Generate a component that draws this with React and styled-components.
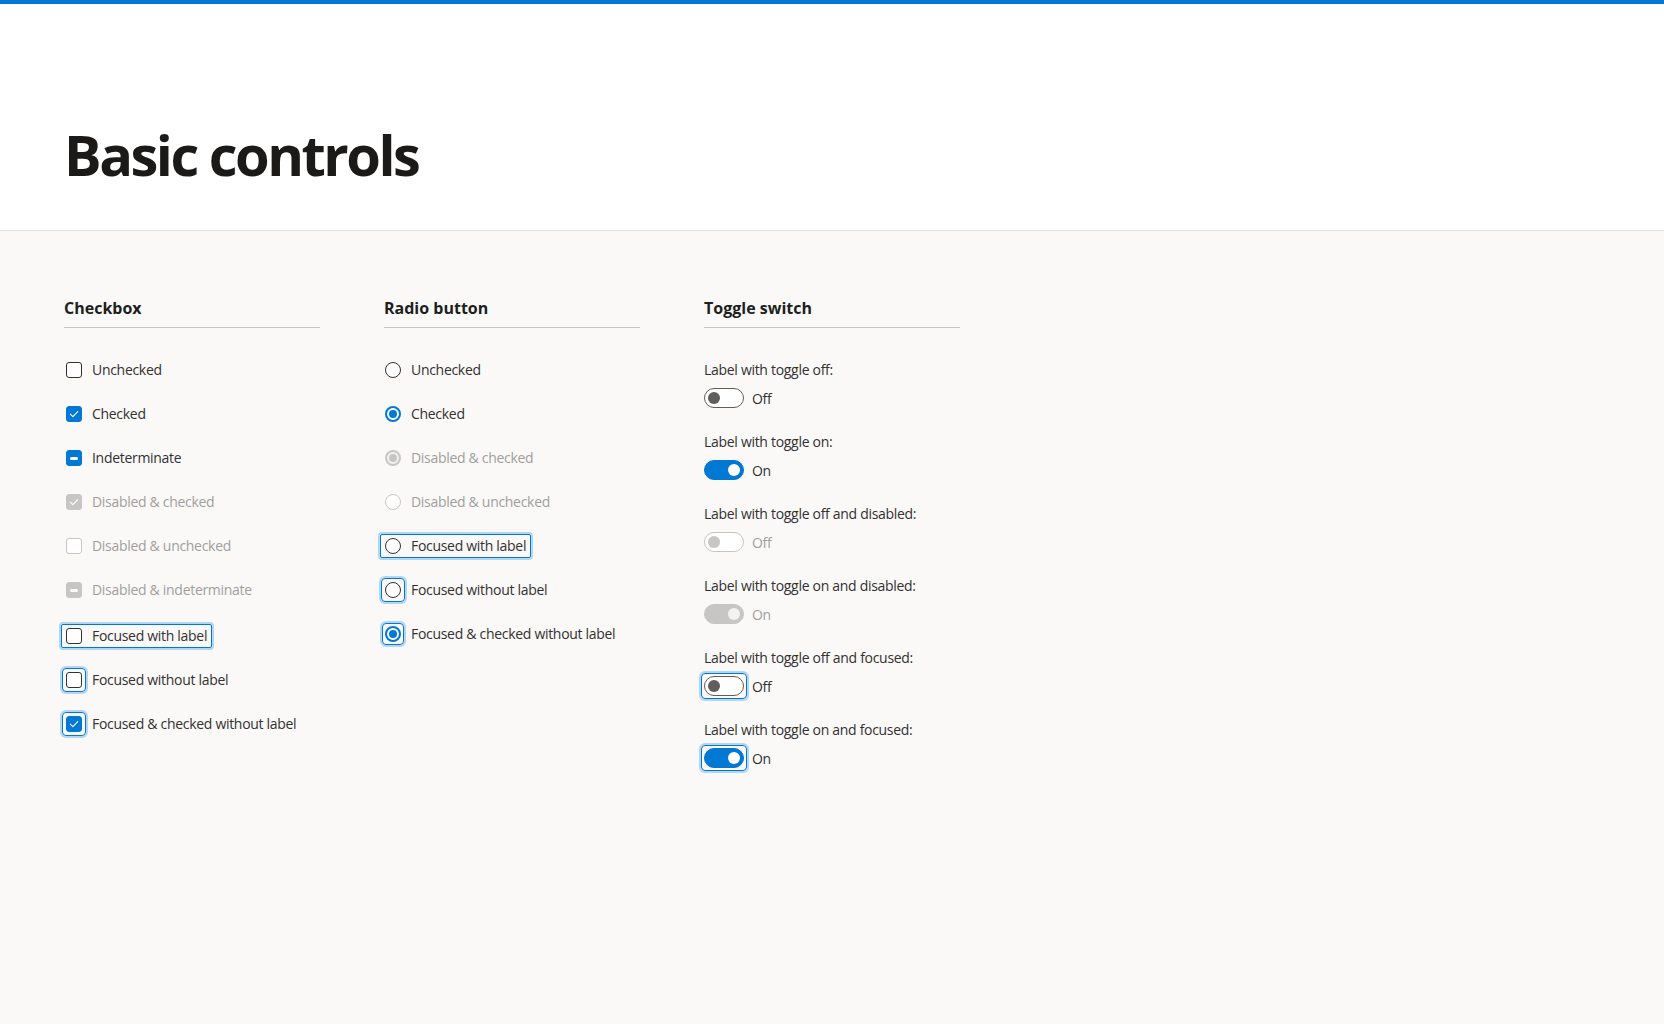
import React from 'react';
import styled, { createGlobalStyle, css } from 'styled-components';

const GlobalStyle = createGlobalStyle`
  html, body {
    margin: 0;
    padding: 0;
    background: #faf9f8;
    font-family: "Segoe UI", "Open Sans", "Noto Sans", sans-serif;
    color: #323130;
  }
  * { box-sizing: border-box; }
`;

const BLUE = '#0078d4';
const HALO = '#b3d6f3';
const DIS = '#c8c6c4';

const Header = styled.header`
  background: #fff;
  border-top: 4px solid ${BLUE};
  border-bottom: 1px solid #e1dfdd;
  padding: 122px 64px 48px;
`;

const Title = styled.h1`
  margin: 0;
  font-size: 56px;
  line-height: 56px;
  font-weight: 700;
  letter-spacing: -2.5px;
  color: #1b1a19;
`;

const Content = styled.main`
  display: grid;
  grid-template-columns: repeat(3, 256px);
  column-gap: 64px;
  padding: 66px 64px 64px;
  min-height: 792px;
`;

const Section = styled.section`
  display: flex;
  flex-direction: column;
`;

const SectionTitle = styled.h2`
  margin: 0 0 32px;
  font-size: 16px;
  line-height: 22px;
  font-weight: 700;
  color: #201f1e;
  padding-bottom: 8px;
  border-bottom: 1px solid ${DIS};
`;

const List = styled.div`
  display: flex;
  flex-direction: column;
  align-items: flex-start;
  gap: 24px;
`;

const ring = css`
  content: "";
  position: absolute;
  border: 1px solid ${BLUE};
  box-shadow: 0 0 0 2px ${HALO};
  pointer-events: none;
`;

const Row = styled.label`
  position: relative;
  display: flex;
  align-items: center;
  gap: 10px;
  height: 20px;
  margin-left: ${p => p.$indent}px;
  margin-top: ${p => p.$push || 0}px;
  font-size: 14px;
  line-height: 20px;
  letter-spacing: -0.3px;
  color: ${p => (p.$disabled ? '#a19f9d' : '#323130')};

  ${p => p.$focus === 'label' && css`
    &::before {
      ${ring}
      inset: -2px -5px -2px -5px;
      border-radius: 2px;
    }
  `}
`;

const Box = styled.span`
  position: relative;
  flex: none;
  display: flex;
  align-items: center;
  justify-content: center;
  width: 16px;
  height: 16px;
  border-radius: 3px;
  border: 1px solid ${p => (p.$disabled ? DIS : p.$filled ? BLUE : '#323130')};
  background: ${p => (p.$filled ? (p.$disabled ? DIS : BLUE) : '#fff')};

  ${p => p.$focus && css`
    &::before {
      ${ring}
      inset: -5px;
      border-radius: 4px;
    }
  `}
`;

const Dash = styled.span`
  width: 8px;
  height: 3px;
  border-radius: 2px;
  background: #fff;
`;

const Circle = styled.span`
  position: relative;
  flex: none;
  display: flex;
  align-items: center;
  justify-content: center;
  width: 16px;
  height: 16px;
  border-radius: 50%;
  border: ${p => (p.$checked ? 2 : 1)}px solid ${p => (p.$disabled ? DIS : p.$checked ? BLUE : '#323130')};
  background: ${p => (p.$disabled && p.$checked ? '#f3f2f1' : '#fff')};

  &::after {
    content: "";
    display: ${p => (p.$checked ? 'block' : 'none')};
    width: 8px;
    height: 8px;
    border-radius: 50%;
    background: ${p => (p.$disabled ? DIS : BLUE)};
  }

  ${p => p.$focus && css`
    &::before {
      ${ring}
      inset: -5px;
      border-radius: 4px;
    }
  `}
`;

const ToggleGroup = styled.div`
  display: flex;
  flex-direction: column;
  gap: 8px;
`;

const ToggleLabel = styled.div`
  font-size: 14px;
  line-height: 20px;
  letter-spacing: -0.3px;
  color: #323130;
`;

const ToggleRow = styled.div`
  display: flex;
  align-items: center;
  gap: 8px;
  height: 20px;
  font-size: 14px;
  letter-spacing: -0.3px;
  color: ${p => (p.$disabled ? '#a19f9d' : '#323130')};
`;

const Track = styled.span`
  position: relative;
  flex: none;
  display: flex;
  align-items: center;
  justify-content: ${p => (p.$on ? 'flex-end' : 'flex-start')};
  width: 40px;
  height: 20px;
  padding: 0 3px;
  border-radius: 10px;
  border: 1px solid ${p => (p.$disabled ? DIS : p.$on ? BLUE : '#605e5c')};
  background: ${p => (p.$on ? (p.$disabled ? DIS : BLUE) : '#fff')};

  ${p => p.$focus && css`
    &::before {
      ${ring}
      inset: -4px;
      border-radius: 4px;
    }
  `}
`;

const Thumb = styled.span`
  width: 12px;
  height: 12px;
  border-radius: 50%;
  background: ${p => (p.$on ? (p.$disabled ? '#f3f2f1' : '#fff') : p.$disabled ? DIS : '#605e5c')};
`;

const Check = () => (
  <svg width="10" height="10" viewBox="0 0 10 10" fill="none">
    <path d="M1.3 5.2 L3.9 7.6 L8.7 2.6" stroke="#fff" strokeWidth="1.1" strokeLinecap="round" strokeLinejoin="round" />
  </svg>
);

const CHECKBOXES = [
  { label: 'Unchecked' },
  { label: 'Checked', state: 'checked' },
  { label: 'Indeterminate', state: 'mixed' },
  { label: 'Disabled & checked', state: 'checked', disabled: true },
  { label: 'Disabled & unchecked', disabled: true },
  { label: 'Disabled & indeterminate', state: 'mixed', disabled: true },
  { label: 'Focused with label', focus: 'label', push: 2 },
  { label: 'Focused without label', focus: 'box' },
  { label: 'Focused & checked without label', state: 'checked', focus: 'box' },
];

const RADIOS = [
  { label: 'Unchecked' },
  { label: 'Checked', checked: true },
  { label: 'Disabled & checked', checked: true, disabled: true },
  { label: 'Disabled & unchecked', disabled: true },
  { label: 'Focused with label', focus: 'label' },
  { label: 'Focused without label', focus: 'box' },
  { label: 'Focused & checked without label', checked: true, focus: 'box' },
];

const TOGGLES = [
  { label: 'Label with toggle off:' },
  { label: 'Label with toggle on:', on: true },
  { label: 'Label with toggle off and disabled:', disabled: true },
  { label: 'Label with toggle on and disabled:', on: true, disabled: true },
  { label: 'Label with toggle off and focused:', focus: true },
  { label: 'Label with toggle on and focused:', on: true, focus: true },
];

export default function App() {
  return (
    <>
      <GlobalStyle />
      <Header>
        <Title>Basic controls</Title>
      </Header>
      <Content>
        <Section>
          <SectionTitle>Checkbox</SectionTitle>
          <List>
            {CHECKBOXES.map(c => (
              <Row key={c.label} $indent={2} $push={c.push} $disabled={c.disabled} $focus={c.focus}>
                <Box $filled={!!c.state} $disabled={c.disabled} $focus={c.focus === 'box'}>
                  {c.state === 'checked' && <Check />}
                  {c.state === 'mixed' && <Dash />}
                </Box>
                {c.label}
              </Row>
            ))}
          </List>
        </Section>

        <Section>
          <SectionTitle>Radio button</SectionTitle>
          <List>
            {RADIOS.map(r => (
              <Row key={r.label} $indent={1} $disabled={r.disabled} $focus={r.focus}>
                <Circle $checked={r.checked} $disabled={r.disabled} $focus={r.focus === 'box'} />
                {r.label}
              </Row>
            ))}
          </List>
        </Section>

        <Section>
          <SectionTitle>Toggle switch</SectionTitle>
          <List>
            {TOGGLES.map(t => (
              <ToggleGroup key={t.label}>
                <ToggleLabel>{t.label}</ToggleLabel>
                <ToggleRow $disabled={t.disabled}>
                  <Track $on={t.on} $disabled={t.disabled} $focus={t.focus}>
                    <Thumb $on={t.on} $disabled={t.disabled} />
                  </Track>
                  {t.on ? 'On' : 'Off'}
                </ToggleRow>
              </ToggleGroup>
            ))}
          </List>
        </Section>
      </Content>
    </>
  );
}
